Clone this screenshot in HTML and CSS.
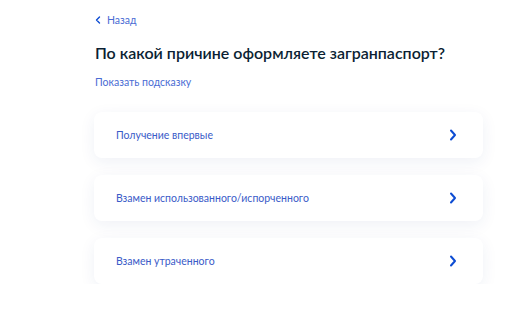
FILE: index.html
```html
<!DOCTYPE html>
<html lang="ru">
<head>
<meta charset="utf-8">
<link rel="stylesheet" href="styles.css">
</head>
<body>
<main class="page">
  <a class="back" href="#">
    <svg class="back-icon" width="6" height="8" viewBox="0 0 6 8"><path d="M4.5 1 L1.5 4 L4.5 7" fill="none" stroke="#0d4cd3" stroke-width="1.4" stroke-linecap="round" stroke-linejoin="round"/></svg>
    <span>Назад</span>
  </a>
  <h1 class="title">По какой причине оформляете загранпаспорт?</h1>
  <a class="hint" href="#">Показать подсказку</a>
  <div class="options">
    <a class="option" href="#"><span>Получение впервые</span>
      <svg class="chev" width="8" height="12" viewBox="0 0 8 12"><path d="M2 1.5 L6 6 L2 10.5" fill="none" stroke="#0d4cd3" stroke-width="2" stroke-linecap="round" stroke-linejoin="round"/></svg></a>
    <a class="option" href="#"><span>Взамен использованного/испорченного</span>
      <svg class="chev" width="8" height="12" viewBox="0 0 8 12"><path d="M2 1.5 L6 6 L2 10.5" fill="none" stroke="#0d4cd3" stroke-width="2" stroke-linecap="round" stroke-linejoin="round"/></svg></a>
    <a class="option" href="#"><span>Взамен утраченного</span>
      <svg class="chev" width="8" height="12" viewBox="0 0 8 12"><path d="M2 1.5 L6 6 L2 10.5" fill="none" stroke="#0d4cd3" stroke-width="2" stroke-linecap="round" stroke-linejoin="round"/></svg></a>
  </div>
</main>
</body>
</html>
```
FILE: styles.css
```css
html, body { margin: 0; padding: 0; background: #ffffff; }
body { font-family: Lato, "Noto Sans", sans-serif; color: #0b1f33; }
.page { width: 389px; margin-left: 94px; padding-top: 13px; }
a { text-decoration: none; }
.back { display: flex; align-items: center; gap: 6px; color: #4a6cd4; font-size: 10.5px; line-height: 14px; padding-left: 1px; }
.back-icon { display: block; }
.title { margin: 16px 0 0 1px; font-size: 16px; font-weight: 600; line-height: 20px; color: #0b1f33; }
.hint { display: block; margin: 12px 0 0 1px; color: #4a6cd4; font-size: 10.5px; line-height: 14px; }
.options { display: flex; flex-direction: column; gap: 17px; margin-top: 23px; }
.option { display: flex; align-items: center; justify-content: space-between; height: 46px; padding: 0 26px 0 22px; border-radius: 8px; background: #fff; box-shadow: 0 4px 16px rgba(30, 60, 130, 0.07); color: #3a5bc8; font-size: 10.5px; }
.chev { display: block; }
```
